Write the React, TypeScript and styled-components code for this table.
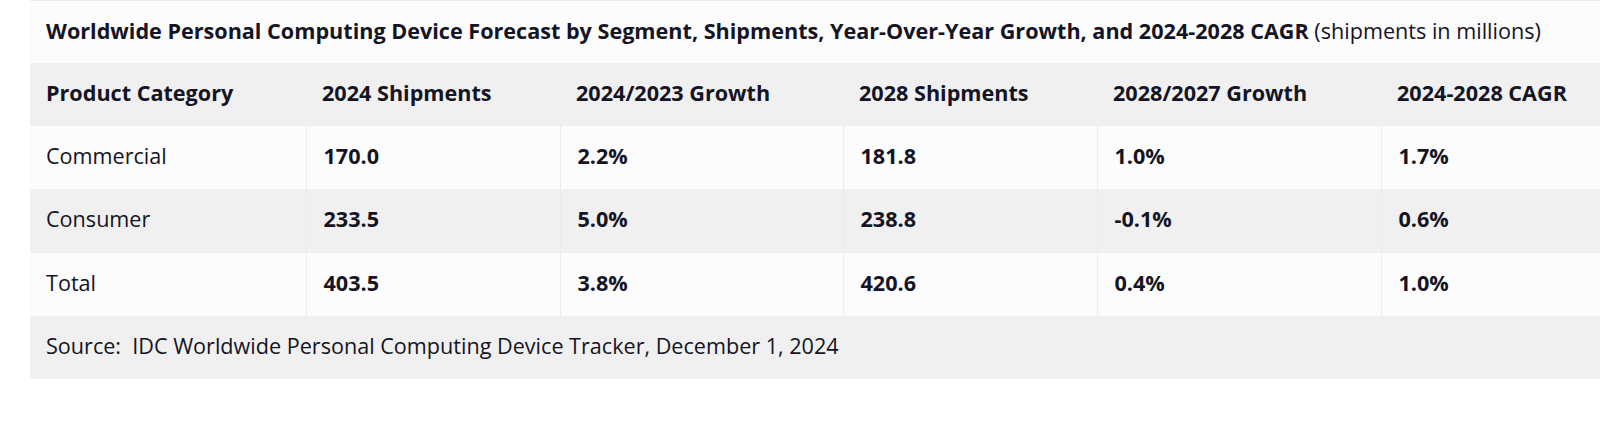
import styled, { createGlobalStyle } from "styled-components";

const GlobalStyle = createGlobalStyle`
  html, body {
    margin: 0;
    padding: 0;
    background: #ffffff;
    overflow: hidden;
  }
  body {
    font-family: "Open Sans", "Noto Sans", sans-serif;
    color: #141424;
  }
`;

const Page = styled.div`
  width: 1600px;
  height: 436px;
  overflow: hidden;
  padding-left: 30px;
  box-sizing: border-box;
`;

const Table = styled.table`
  border-collapse: collapse;
  table-layout: fixed;
  width: 1635px;
  font-size: 21.6px;
  line-height: 27px;
  border-top: 1px solid #ededed;
`;

const Row = styled.tr<{ $shade?: boolean }>`
  background: ${({ $shade }) => ($shade ? "#f0f0f0" : "#fcfcfc")};
`;

const Title = styled.td`
  padding: 16px 16px 19px;
  font-weight: 700;
  white-space: nowrap;
  span {
    font-weight: 400;
  }
`;

const Head = styled.th`
  padding: 16px 16px 20.2px;
  text-align: left;
  font-weight: 700;
  white-space: nowrap;
`;

const Cell = styled.td<{ $bold?: boolean }>`
  padding: 16px 17px 20.2px;
  font-weight: ${({ $bold }) => ($bold ? 700 : 400)};
  white-space: nowrap;
  & + & {
    border-left: 1px solid #ececec;
  }
  &:first-child {
    padding-left: 16px;
  }
`;

const Source = styled.td`
  padding: 16px 16px 20.2px;
  white-space: pre;
`;

const widths = [276, 254, 283, 254, 284, 284];

const headers = [
  "Product Category",
  "2024 Shipments",
  "2024/2023 Growth",
  "2028 Shipments",
  "2028/2027 Growth",
  "2024-2028 CAGR",
];

const rows = [
  ["Commercial", "170.0", "2.2%", "181.8", "1.0%", "1.7%"],
  ["Consumer", "233.5", "5.0%", "238.8", "-0.1%", "0.6%"],
  ["Total", "403.5", "3.8%", "420.6", "0.4%", "1.0%"],
];

export default function App() {
  return (
    <Page>
      <GlobalStyle />
      <Table>
        <colgroup>
          {widths.map((w, i) => (
            <col key={i} style={{ width: w }} />
          ))}
        </colgroup>
        <tbody>
          <Row>
            <Title colSpan={6}>
              Worldwide Personal Computing Device Forecast by Segment, Shipments,
              Year-Over-Year Growth, and 2024-2028 CAGR <span>(shipments in millions)</span>
            </Title>
          </Row>
          <Row $shade>
            {headers.map((h) => (
              <Head key={h}>{h}</Head>
            ))}
          </Row>
          {rows.map((r, i) => (
            <Row key={r[0]} $shade={i % 2 === 1}>
              {r.map((c, j) => (
                <Cell key={j} $bold={j > 0}>
                  {c}
                </Cell>
              ))}
            </Row>
          ))}
          <Row $shade>
            <Source colSpan={6}>
              {"Source:  IDC Worldwide Personal Computing Device Tracker, December 1, 2024"}
            </Source>
          </Row>
        </tbody>
      </Table>
    </Page>
  );
}
